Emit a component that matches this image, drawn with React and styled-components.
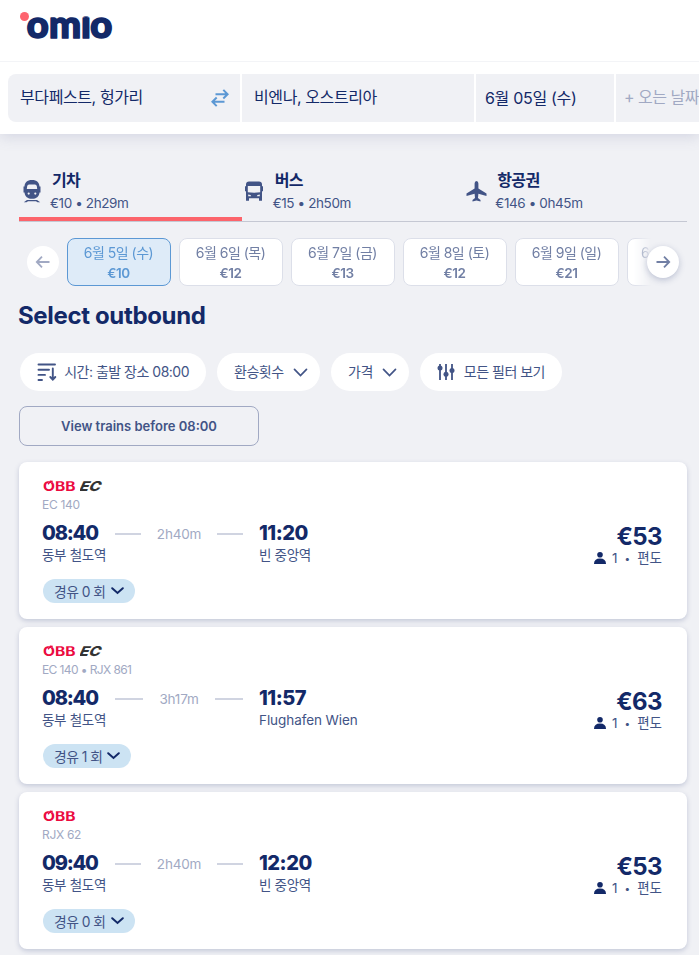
import React from "react";
import styled, { createGlobalStyle } from "styled-components";

const GlobalStyle = createGlobalStyle`
  * {
    box-sizing: border-box;
  }

  body {
    margin: 0;
    height: 955px;
    overflow: hidden;
    background: #f0f1f5;
    color: #132968;
    font-family: Inter, "Noto Sans CJK KR", sans-serif;
  }

  button {
    font: inherit;
    border: none;
    padding: 0;
    cursor: pointer;
  }

  svg {
    display: block;
    flex: none;
  }
`;

const Page = styled.div`
  width: 699px;
  height: 955px;
  overflow: hidden;
`;

const Header = styled.header`
  position: relative;
  z-index: 1;
  height: 62px;
  padding: 10px 20px 0;
  background: #fff;
  border-bottom: 1px solid #f3f4f7;
`;

const SearchBar = styled.div`
  display: flex;
  gap: 2px;
  height: 72px;
  padding: 12px 0 12px 8px;
  background: #fff;
  box-shadow: 0 2px 14px rgba(100, 105, 150, 0.22);
`;

const Field = styled.div`
  flex: none;
  display: flex;
  align-items: center;
  justify-content: space-between;
  width: ${(props) => props.$width}px;
  height: 48px;
  padding: 0 11px ${(props) => (props.$latin ? 3 : 4)}px ${(props) => props.$left || 12}px;
  border-radius: ${(props) => (props.$first ? "8px 0 0 8px" : "0")};
  background: #f0f1f5;
  color: ${(props) => (props.$muted ? "#a1a9c3" : "#132968")};
  font-size: 16px;
  letter-spacing: ${(props) => props.$spacing || 0}px;
  white-space: nowrap;

  svg {
    margin-top: 3px;
  }
`;

const Main = styled.main`
  padding: 28px 12px 0 19px;
`;

const Tabs = styled.nav`
  display: flex;
  height: 60px;
  border-bottom: 1px solid #c5c8d3;
`;

const Tab = styled.div`
  flex: 1;
  display: flex;
  gap: 8px;
  padding-left: 2px;
  height: 59px;
  border-bottom: 4px solid ${(props) => (props.$active ? "#fc646b" : "transparent")};
  color: #425486;
`;

const TabIcon = styled.div`
  display: flex;
  justify-content: center;
  width: 21px;
  padding-top: 18px;
`;

const TabTitle = styled.div`
  height: 24px;
  padding-left: 2px;
  margin-top: 6px;
  color: #132968;
  font-size: 16px;
  font-weight: 700;
  line-height: 24px;
  letter-spacing: -0.7px;
`;

const TabInfo = styled.div`
  font-size: 13.5px;
  line-height: 23px;
  letter-spacing: -0.4px;
`;

const Dates = styled.div`
  display: flex;
  position: relative;
  height: 48px;
  margin-top: 16px;
  padding-left: 48px;
`;

const DateTrack = styled.div`
  display: flex;
  gap: 8px;
  width: 584px;
  overflow: hidden;
  mask-image: linear-gradient(to right, #000 566px, transparent 584px);
`;

const DateCard = styled.div`
  flex: none;
  width: 104px;
  height: 48px;
  padding: 4px 1px 0 0;
  border: 1px solid ${(props) => (props.$active ? "#5c98d4" : "#dcdfe9")};
  border-radius: 8px;
  background: ${(props) => (props.$active ? "#deebf8" : "#fff")};
  color: ${(props) => (props.$active ? "#5c98d4" : "#717fa4")};
  font-size: 14px;
  line-height: 20px;
  text-align: center;
  letter-spacing: -0.5px;
  white-space: nowrap;
`;

const DatePrice = styled.div`
  font-size: 13.5px;
  font-weight: 600;
`;

const RoundButton = styled.button`
  position: absolute;
  top: 8px;
  ${(props) => (props.$next ? "left: 628px" : "left: 8px")};
  display: flex;
  align-items: center;
  justify-content: center;
  width: 32px;
  height: 32px;
  border-radius: 50%;
  background: #fff;
  color: ${(props) => (props.$next ? "#717fa4" : "#a1a9c3")};
  box-shadow: ${(props) => (props.$next ? "0 2px 6px rgba(66, 84, 134, 0.3)" : "none")};
`;

const Heading = styled.h1`
  margin: 12px 0 0 -1px;
  height: 36px;
  font-size: 24px;
  font-weight: 700;
  line-height: 36px;
  letter-spacing: -0.35px;
`;

const Filters = styled.div`
  display: flex;
  gap: 11px;
  margin: 19px 0 0 1px;
`;

const Filter = styled.button`
  display: flex;
  align-items: center;
  justify-content: space-between;
  width: ${(props) => props.$width}px;
  height: 38px;
  padding: 0 ${(props) => props.$right}px 0 17px;
  border-radius: 19px;
  background: #fff;
  color: #425486;
  font-size: 14px;
  letter-spacing: -0.5px;
  white-space: nowrap;

  span {
    padding-bottom: 2px;
  }
`;

const EarlierButton = styled.button`
  display: block;
  width: 240px;
  height: 40px;
  margin-top: 15px;
  border: 1px solid #a1a9c3;
  border-radius: 8px;
  background: transparent;
  color: #425486;
  font-size: 13px;
  font-weight: 600;
`;

const Results = styled.div`
  display: flex;
  flex-direction: column;
  gap: 8px;
  margin-top: 16px;
`;

const Card = styled.article`
  display: flex;
  justify-content: space-between;
  height: 157px;
  padding: 18px 24px 0;
  border-radius: 8px;
  background: #fff;
  box-shadow: 0 2px 5px rgba(66, 84, 134, 0.25);
`;

const Carriers = styled.div`
  display: flex;
  gap: 4px;
  height: 12px;
`;

const TrainNumber = styled.div`
  height: 24px;
  margin: 1px 0 0 -1px;
  color: #a1a9c3;
  font-size: 12px;
  line-height: 24px;
  letter-spacing: ${(props) => (props.$long ? -0.6 : -0.3)}px;
`;

const Journey = styled.div`
  display: grid;
  grid-template-columns: 56px 128px auto;
  grid-template-rows: 24px 20px;
  column-gap: 16px;
  align-items: center;
  margin-top: 4px;
`;

const Time = styled.div`
  margin-left: ${(props) => (props.$departure ? -1 : 0)}px;
  font-size: 20px;
  font-weight: 800;
  line-height: 24px;
  letter-spacing: ${(props) => (props.$departure ? -1.2 : -0.5)}px;
  white-space: nowrap;
`;

const Duration = styled.div`
  display: flex;
  align-items: center;
  gap: 16px;
  padding-top: 2px;
  color: #a1a9c3;
  font-size: 13.5px;
  line-height: 22px;
  letter-spacing: -0.2px;

  &::before,
  &::after {
    content: "";
    flex: 1;
    height: 2px;
    background: #d0d4e1;
  }
`;

const Station = styled.div`
  grid-column: ${(props) => props.$column};
  margin-left: ${(props) => (props.$column === 1 ? -1 : 0)}px;
  color: #425486;
  font-size: 13.5px;
  line-height: 20px;
  letter-spacing: ${(props) => (props.$latin ? -0.07 : -0.3)}px;
  white-space: nowrap;
`;

const Stops = styled.button`
  display: flex;
  align-items: center;
  gap: 5px;
  height: 24px;
  margin-top: 14px;
  padding: 0 11px 1px;
  border-radius: 12px;
  background: #cce3f3;
  color: #425486;
  font-size: 13.8px;
  letter-spacing: -0.5px;
`;

const Fare = styled.div`
  display: flex;
  flex-direction: column;
  align-items: flex-end;
  padding-top: 43px;
`;

const Price = styled.div`
  padding-right: 1px;
  font-size: 24px;
  font-weight: 700;
  line-height: 27px;
  letter-spacing: -0.6px;
`;

const Passengers = styled.div`
  display: flex;
  align-items: center;
  gap: 6px;
  padding-right: 1px;
  color: #425486;
  font-size: 13.5px;
  line-height: 16px;
`;

const Dot = styled.span`
  margin: 0 1px;
  font-size: 10px;
`;

const OmioLogo = () => (
  <svg width="94" height="30" viewBox="0 0 94 30">
    <svg x="0" y="6.500" width="94" height="22.500" viewBox="0 6.5 94 22.5">
      <text
        x="6.700 29 61 70.300"
        y="27.500"
        fill="#132968"
        stroke="#132968"
        strokeWidth="1.700"
        strokeLinejoin="round"
        fontFamily="Lato"
        fontWeight="900"
        fontSize="38"
      >
        omio
      </text>
    </svg>
    <circle cx="4.500" cy="6.500" r="5.500" fill="#fff" />
    <circle cx="4.500" cy="6.500" r="4.500" fill="#fe646f" />
  </svg>
);

const ObbLogo = () => (
  <svg width="33" height="12" viewBox="0 0 33 12">
    <svg y="1.200" width="33" height="10.800" viewBox="0 1.2 33 10.8">
      <text
        x="0"
        y="11"
        fill="#eb0a3f"
        fontFamily="Inter"
        fontWeight="700"
        fontSize="13"
        textLength="32.500"
        lengthAdjust="spacingAndGlyphs"
      >
        ÖBB
      </text>
    </svg>
    <path d="M5.600 4.800 8 .8" stroke="#fff" strokeWidth="2.400" />
    <path d="M5 4.200 7.800 .8M7 2.500 9.500 1" stroke="#eb0a3f" strokeWidth="1.500" />
  </svg>
);

const EcLogo = () => (
  <svg width="24" height="12" viewBox="0 0 24 12">
    <text
      x="0"
      y="10.800"
      transform="translate(3 0) skewX(-24)"
      fill="#333"
      fontFamily="Inter"
      fontWeight="800"
      fontSize="13.500"
      textLength="21"
      lengthAdjust="spacingAndGlyphs"
    >
      EC
    </text>
  </svg>
);

const TrainIcon = () => (
  <svg width="20" height="23" viewBox="0 0 20 23" fill="currentColor">
    <path
      fillRule="evenodd"
      d="M10 0C15 0 17.200 2.500 17.500 6.500H18.500V12.500H17.500C17 16.500 14.500 18.800 10 18.800S3 16.500 2.500 12.500H1.500V6.500H2.500C2.800 2.500 5 0 10 0ZM7 4.500Q5.600 4.500 5.200 6L4.800 9H15.200L14.800 6Q14.400 4.500 13 4.500ZM6.700 12.500A1.100 1.100 0 1 0 6.700 14.700 1.100 1.100 0 1 0 6.700 12.500ZM13.300 12.500A1.100 1.100 0 1 0 13.300 14.700 1.100 1.100 0 1 0 13.300 12.500Z"
    />
    <path d="M5 20h10l3.200 2.200h-2.700L14 21.200H6l-1.500 1H1.800Z" />
  </svg>
);

const BusIcon = () => (
  <svg width="20" height="22" viewBox="0 0 20 22" fill="currentColor">
    <path
      fillRule="evenodd"
      d="M5 1.500h10q2.800 0 3 2.800v2h1v5h-1v9.500h-3v-2.500H5v2.500H2v-9.500H1v-5h1v-2Q2.200 1.500 5 1.500ZM3.800 6v6.300q6.200.8 12.400 0V6ZM4.200 14.500v1.800h3L6.500 15ZM15.800 14.500v1.800h-3l.7-1.300Z"
    />
  </svg>
);

const PlaneIcon = () => (
  <svg width="21" height="23" viewBox="0 0 21 23" fill="currentColor">
    <path d="M10.500 1Q12.400 1 12.400 3.500V8.500L20.500 13.500V16L12.400 13.800 12 18 14.500 20V21.500L10.500 20.500 6.500 21.500V20L9 18 8.600 13.800.5 16V13.500L8.600 8.500V3.500Q8.600 1 10.500 1Z" />
  </svg>
);

const SwapIcon = () => (
  <svg width="18" height="18" viewBox="0 0 18 18" fill="none" stroke="#5c98d4" strokeWidth="2">
    <path d="M4.500 5.200h12M12.300 .9l4.300 4.300-4.300 4.300M13.500 12.800H1.500M5.700 8.500 1.400 12.800l4.300 4.300" />
  </svg>
);

const ArrowIcon = ({ left }) => (
  <svg width="16" height="16" viewBox="0 0 16 16" fill="none" stroke="currentColor" strokeWidth="1.800">
    <path d={left ? "M14.500 8H2M7 2.700 1.800 8 7 13.300" : "M1.500 8h12.500M9 2.700 14.200 8 9 13.300"} />
  </svg>
);

const SortIcon = () => (
  <svg
    width="20"
    height="20"
    viewBox="0 0 20 20"
    fill="none"
    stroke="currentColor"
    strokeWidth="1.900"
    strokeLinecap="round"
  >
    <path d="M1.500 2.500h16.500M1.500 7.700h10.500M1.500 12.900h6.500M1.500 18h3.500M15.800 6.500v10.500M13.300 15l2.500 2.700 2.500-2.700" />
  </svg>
);

const SlidersIcon = () => (
  <svg width="18" height="18" viewBox="0 0 18 18" fill="currentColor">
    <path d="M2.100 1h1.800v16H2.100ZM8.100 1h1.800v16H8.100ZM14.100 1h1.800v16h-1.800Z" />
    <circle cx="3" cy="5" r="2.500" />
    <circle cx="9" cy="11.200" r="2.500" />
    <circle cx="15" cy="7.600" r="2.500" />
  </svg>
);

const Chevron = ({ small }) => (
  <svg
    width={small ? 13 : 15}
    height="9"
    viewBox={small ? "0 0 13 9" : "0 0 15 9"}
    fill="none"
    stroke={small ? "#132968" : "currentColor"}
    strokeWidth={small ? 2 : 1.7}
    strokeLinecap="round"
  >
    <path d={small ? "M1.200 2.200 6.500 7 11.800 2.200" : "M1.500 1.300 7.500 7.500 13.500 1.300"} />
  </svg>
);

const PersonIcon = () => (
  <svg width="12" height="12" viewBox="0 0 12 12" fill="#132968">
    <circle cx="6" cy="2.800" r="2.800" />
    <path d="M0 12q0-5.500 6-5.500T12 12Z" />
  </svg>
);

const tabs = [
  { title: "기차", info: "€10 • 2h29m", icon: <TrainIcon />, active: true },
  { title: "버스", info: "€15 • 2h50m", icon: <BusIcon /> },
  { title: "항공권", info: "€146 • 0h45m", icon: <PlaneIcon /> },
];

const dates = [
  { day: "6월 5일 (수)", price: "€10", active: true },
  { day: "6월 6일 (목)", price: "€12" },
  { day: "6월 7일 (금)", price: "€13" },
  { day: "6월 8일 (토)", price: "€12" },
  { day: "6월 9일 (일)", price: "€21" },
  { day: "6월 10일 (월)", price: "" },
];

const trips = [
  { ec: true, train: "EC 140", from: "08:40", to: "11:20", length: "2h40m", station: "빈 중앙역", price: "€53", stops: 0 },
  { ec: true, train: "EC 140 • RJX 861", from: "08:40", to: "11:57", length: "3h17m", station: "Flughafen Wien", price: "€63", stops: 1 },
  { ec: false, train: "RJX 62", from: "09:40", to: "12:20", length: "2h40m", station: "빈 중앙역", price: "€53", stops: 0 },
];

const Trip = ({ trip }) => (
  <Card>
    <div>
      <Carriers>
        <ObbLogo />
        {trip.ec && <EcLogo />}
      </Carriers>
      <TrainNumber $long={trip.train.length > 6}>{trip.train}</TrainNumber>
      <Journey>
        <Time $departure>{trip.from}</Time>
        <Duration>{trip.length}</Duration>
        <Time>{trip.to}</Time>
        <Station $column={1}>동부 철도역</Station>
        <Station $column={3} $latin={trip.stops > 0}>
          {trip.station}
        </Station>
      </Journey>
      <Stops>
        {`경유 ${trip.stops} 회`}
        <Chevron small />
      </Stops>
    </div>
    <Fare>
      <Price>{trip.price}</Price>
      <Passengers>
        <PersonIcon />
        <span>1</span>
        <Dot>•</Dot>
        <span>편도</span>
      </Passengers>
    </Fare>
  </Card>
);

const App = () => (
  <Page>
    <GlobalStyle />
    <Header>
      <OmioLogo />
    </Header>
    <SearchBar>
      <Field $width={232} $first $spacing={-0.4}>
        부다페스트, 헝가리
        <SwapIcon />
      </Field>
      <Field $width={232} $spacing={-0.4}>비엔나, 오스트리아</Field>
      <Field $width={138} $left={9} $spacing={-0.3} $latin>6월 05일 (수)</Field>
      <Field $width={138} $left={8} $spacing={-0.5} $muted>+ 오는 날짜</Field>
    </SearchBar>
    <Main>
      <Tabs>
        {tabs.map((tab) => (
          <Tab key={tab.title} $active={tab.active}>
            <TabIcon>{tab.icon}</TabIcon>
            <div>
              <TabTitle>{tab.title}</TabTitle>
              <TabInfo>{tab.info}</TabInfo>
            </div>
          </Tab>
        ))}
      </Tabs>
      <Dates>
        <RoundButton>
          <ArrowIcon left />
        </RoundButton>
        <DateTrack>
          {dates.map((date) => (
            <DateCard key={date.day} $active={date.active}>
              {date.day}
              <DatePrice>{date.price}</DatePrice>
            </DateCard>
          ))}
        </DateTrack>
        <RoundButton $next>
          <ArrowIcon />
        </RoundButton>
      </Dates>
      <Heading>Select outbound</Heading>
      <Filters>
        <Filter $width={186} $right={17}>
          <SortIcon />
          <span>시간: 출발 장소 08:00</span>
        </Filter>
        <Filter $width={103} $right={12}>
          <span>환승횟수</span>
          <Chevron />
        </Filter>
        <Filter $width={78} $right={12}>
          <span>가격</span>
          <Chevron />
        </Filter>
        <Filter $width={142} $right={17}>
          <SlidersIcon />
          <span>모든 필터 보기</span>
        </Filter>
      </Filters>
      <EarlierButton>View trains before 08:00</EarlierButton>
      <Results>
        {trips.map((trip) => (
          <Trip key={trip.train} trip={trip} />
        ))}
      </Results>
    </Main>
  </Page>
);

export default App;
